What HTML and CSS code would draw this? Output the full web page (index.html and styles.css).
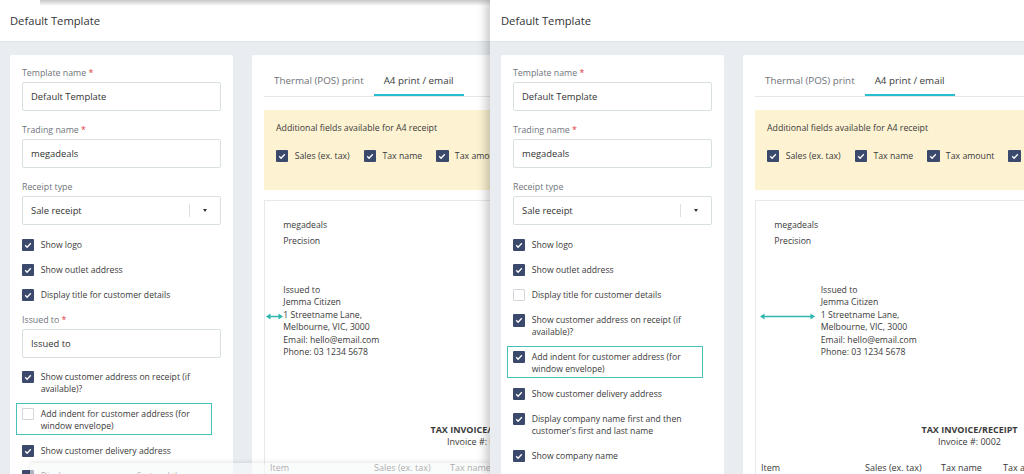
FILE: index.html
```html
<!DOCTYPE html>
<html>
<head>
<meta charset="utf-8">
<link rel="stylesheet" href="styles.css">
</head>
<body>
<div class="stage">
  <section class="shot shot-a">
    <header class="topbar">Default Template</header>
    <div class="main">
      <div class="card form-card">
        <div class="field">
          <div class="label">Template name <span class="req">*</span></div>
          <div class="input">Default Template</div>
        </div>
        <div class="field">
          <div class="label">Trading name <span class="req">*</span></div>
          <div class="input">megadeals</div>
        </div>
        <div class="field">
          <div class="label">Receipt type</div>
          <div class="input select">Sale receipt<span class="sep"></span><span class="caret-box"><span class="caret"></span></span></div>
        </div>
        <div class="check-row first"><span class="cb"><svg viewBox="0 0 12 12"><path d="M3.2 6.3l1.9 1.9 3.7-3.9"/></svg></span><span>Show logo</span></div>
        <div class="check-row"><span class="cb"><svg viewBox="0 0 12 12"><path d="M3.2 6.3l1.9 1.9 3.7-3.9"/></svg></span><span>Show outlet address</span></div>
        <div class="check-row"><span class="cb"><svg viewBox="0 0 12 12"><path d="M3.2 6.3l1.9 1.9 3.7-3.9"/></svg></span><span>Display title for customer details</span></div>
        <div class="field">
          <div class="label">Issued to <span class="req">*</span></div>
          <div class="input">Issued to</div>
        </div>
        <div class="check-row"><span class="cb"><svg viewBox="0 0 12 12"><path d="M3.2 6.3l1.9 1.9 3.7-3.9"/></svg></span><span>Show customer address on receipt (if<br>available)?</span></div>
        <div class="check-row hl"><span class="cb off"></span><span>Add indent for customer address (for<br>window envelope)</span></div>
        <div class="check-row"><span class="cb"><svg viewBox="0 0 12 12"><path d="M3.2 6.3l1.9 1.9 3.7-3.9"/></svg></span><span>Show customer delivery address</span></div>
        <div class="check-row"><span class="cb"><svg viewBox="0 0 12 12"><path d="M3.2 6.3l1.9 1.9 3.7-3.9"/></svg></span><span>Display company name first and then<br>customer's first and last name</span></div>
      </div>
      <div class="card preview-card">
        <div class="tabs">
          <div class="tab">Thermal (POS) print</div>
          <div class="tab active">A4 print / email</div>
        </div>
        <div class="extra">
          <div>Additional fields available for A4 receipt</div>
          <div class="extra-opts">
            <div class="opt"><span class="cb"><svg viewBox="0 0 12 12"><path d="M3.2 6.3l1.9 1.9 3.7-3.9"/></svg></span>Sales (ex. tax)</div>
            <div class="opt"><span class="cb"><svg viewBox="0 0 12 12"><path d="M3.2 6.3l1.9 1.9 3.7-3.9"/></svg></span>Tax name</div>
            <div class="opt"><span class="cb"><svg viewBox="0 0 12 12"><path d="M3.2 6.3l1.9 1.9 3.7-3.9"/></svg></span>Tax amount</div>
            <div class="opt"><span class="cb"><svg viewBox="0 0 12 12"><path d="M3.2 6.3l1.9 1.9 3.7-3.9"/></svg></span>Discount</div>
          </div>
        </div>
        <div class="sheet">
          <div class="biz">
            <div>megadeals</div>
            <div class="l2">Precision</div>
          </div>
          <div class="cust">
            <svg class="arrow arrow-a" width="17" height="7" viewBox="0 0 17 7"><path d="M3 3.5H14" stroke="#2fb7ae" stroke-width="1.5"/><path d="M0 3.5L4.5 0.6V6.4Z M17 3.5L12.5 0.6V6.4Z" fill="#2fb7ae"/></svg>
            <div>Issued to</div>
            <div>Jemma Citizen</div>
            <div>1 Streetname Lane,</div>
            <div>Melbourne, VIC, 3000</div>
            <div>Email: hello@email.com</div>
            <div>Phone: 03 1234 5678</div>
          </div>
          <div class="inv">
            <div class="inv-title">TAX INVOICE/RECEIPT</div>
            <div>Invoice #: 0002</div>
          </div>
          <div class="thead">
            <span class="c-item">Item</span><span class="c-sales">Sales (ex. tax)</span><span class="c-tname">Tax name</span><span>Tax amount</span>
          </div>
        </div>
      </div>
    </div>
    <div class="shade-top"></div>
    <div class="shade-bottom"></div>
  </section>

  <section class="shot shot-b">
    <header class="topbar">Default Template</header>
    <div class="main">
      <div class="card form-card">
        <div class="field">
          <div class="label">Template name <span class="req">*</span></div>
          <div class="input">Default Template</div>
        </div>
        <div class="field">
          <div class="label">Trading name <span class="req">*</span></div>
          <div class="input">megadeals</div>
        </div>
        <div class="field">
          <div class="label">Receipt type</div>
          <div class="input select">Sale receipt<span class="sep"></span><span class="caret-box"><span class="caret"></span></span></div>
        </div>
        <div class="check-row first"><span class="cb"><svg viewBox="0 0 12 12"><path d="M3.2 6.3l1.9 1.9 3.7-3.9"/></svg></span><span>Show logo</span></div>
        <div class="check-row"><span class="cb"><svg viewBox="0 0 12 12"><path d="M3.2 6.3l1.9 1.9 3.7-3.9"/></svg></span><span>Show outlet address</span></div>
        <div class="check-row"><span class="cb off"></span><span>Display title for customer details</span></div>
        <div class="check-row"><span class="cb"><svg viewBox="0 0 12 12"><path d="M3.2 6.3l1.9 1.9 3.7-3.9"/></svg></span><span>Show customer address on receipt (if<br>available)?</span></div>
        <div class="check-row hl"><span class="cb"><svg viewBox="0 0 12 12"><path d="M3.2 6.3l1.9 1.9 3.7-3.9"/></svg></span><span>Add indent for customer address (for<br>window envelope)</span></div>
        <div class="check-row"><span class="cb"><svg viewBox="0 0 12 12"><path d="M3.2 6.3l1.9 1.9 3.7-3.9"/></svg></span><span>Show customer delivery address</span></div>
        <div class="check-row"><span class="cb"><svg viewBox="0 0 12 12"><path d="M3.2 6.3l1.9 1.9 3.7-3.9"/></svg></span><span>Display company name first and then<br>customer's first and last name</span></div>
        <div class="check-row"><span class="cb"><svg viewBox="0 0 12 12"><path d="M3.2 6.3l1.9 1.9 3.7-3.9"/></svg></span><span>Show company name</span></div>
      </div>
      <div class="card preview-card">
        <div class="tabs">
          <div class="tab">Thermal (POS) print</div>
          <div class="tab active">A4 print / email</div>
        </div>
        <div class="extra">
          <div>Additional fields available for A4 receipt</div>
          <div class="extra-opts">
            <div class="opt"><span class="cb"><svg viewBox="0 0 12 12"><path d="M3.2 6.3l1.9 1.9 3.7-3.9"/></svg></span>Sales (ex. tax)</div>
            <div class="opt"><span class="cb"><svg viewBox="0 0 12 12"><path d="M3.2 6.3l1.9 1.9 3.7-3.9"/></svg></span>Tax name</div>
            <div class="opt"><span class="cb"><svg viewBox="0 0 12 12"><path d="M3.2 6.3l1.9 1.9 3.7-3.9"/></svg></span>Tax amount</div>
            <div class="opt"><span class="cb"><svg viewBox="0 0 12 12"><path d="M3.2 6.3l1.9 1.9 3.7-3.9"/></svg></span>Discount</div>
          </div>
        </div>
        <div class="sheet">
          <div class="biz">
            <div>megadeals</div>
            <div class="l2">Precision</div>
          </div>
          <div class="cust cust-indent">
            <svg class="arrow arrow-b" width="55" height="7" viewBox="0 0 55 7"><path d="M3 3.5H52" stroke="#2fb7ae" stroke-width="1.5"/><path d="M0 3.5L4.5 0.6V6.4Z M55 3.5L50.5 0.6V6.4Z" fill="#2fb7ae"/></svg>
            <div>Issued to</div>
            <div>Jemma Citizen</div>
            <div>1 Streetname Lane,</div>
            <div>Melbourne, VIC, 3000</div>
            <div>Email: hello@email.com</div>
            <div>Phone: 03 1234 5678</div>
          </div>
          <div class="inv">
            <div class="inv-title">TAX INVOICE/RECEIPT</div>
            <div>Invoice #: 0002</div>
          </div>
          <div class="thead">
            <span class="c-item">Item</span><span class="c-sales">Sales (ex. tax)</span><span class="c-tname">Tax name</span><span>Tax amount</span>
          </div>
        </div>
      </div>
    </div>
  </section>
</div>
</body>
</html>
```

FILE: styles.css
```css
* { box-sizing: border-box; margin: 0; padding: 0; }
html, body { width: 1024px; height: 474px; overflow: hidden; }
body { font-family: "Open Sans", "Noto Sans", sans-serif; color: #3a3a3a; background: #e9edf2; }

.stage { display: flex; height: 474px; }

.shot { position: relative; overflow: hidden; height: 474px; background: #e9edf2; display: flex; flex-direction: column; }
.shot-a { width: 490px; flex-shrink: 0; }
.shot-b { flex: 1; min-width: 0; z-index: 1; box-shadow: -4px 0 9px rgba(0, 0, 0, 0.22); }

.topbar { height: 42px; flex-shrink: 0; background: #fff; border-bottom: 1px solid #e0e4e9; display: flex; align-items: center; padding-left: 10px; font-size: 11.2px; color: #333; }
.shot-b .topbar { padding-left: 11px; }

.main { display: flex; gap: 19px; padding: 13px 10px 0; align-items: flex-start; }
.shot-b .main { padding-left: 11px; }

.card { background: #fff; border-radius: 2px; padding: 12px; flex-shrink: 0; min-height: 440px; }

.form-card { width: 223px; display: flex; flex-direction: column; gap: 12.8px; }
.field { display: flex; flex-direction: column; gap: 3px; }
.label { font-size: 8.8px; line-height: 12px; color: #6f757d; }
.req { color: #e2383f; }
.input { height: 29px; border: 1px solid #d8e0e2; border-radius: 2px; display: flex; align-items: center; padding-left: 8px; font-size: 9.4px; color: #333; }
.select .sep { margin-left: auto; width: 1px; height: 13px; background: #dcdfe3; }
.caret-box { width: 30px; display: flex; justify-content: center; }
.caret { width: 0; height: 0; border-left: 2.5px solid transparent; border-right: 2.5px solid transparent; border-top: 3px solid #333; }

.check-row { position: relative; display: flex; align-items: flex-start; gap: 6.3px; font-size: 8.65px; line-height: 12px; color: #3a3a3a; }
.check-row.first { margin-top: 1.2px; }
.cb { width: 12.4px; height: 12.4px; flex-shrink: 0; background: #3b4a6c; border-radius: 1px; display: flex; align-items: center; justify-content: center; }
.cb svg { width: 12px; height: 12px; }
.cb svg path { fill: none; stroke: #fff; stroke-width: 1.3; }
.cb.off { background: #fff; border: 1px solid #d3d7db; }
.hl::before { content: ""; position: absolute; top: -5px; bottom: -3px; left: -6px; right: 9.5px; border: 1.5px solid #45c1b9; }

.preview-card { width: 430px; }
.tabs { display: flex; border-bottom: 1px solid #e4e7eb; }
.tab { padding: 7px 10px 6.5px; font-size: 9.8px; line-height: 13px; color: #6d7278; border-bottom: 2px solid transparent; }
.tab.active { border-bottom-color: #27bfd0; color: #3a3a3a; }

.extra { margin-top: 13px; background: #fdf3d3; padding: 12px 12px 28px; font-size: 8.75px; line-height: 12px; color: #3a3a3a; }
.extra-opts { display: flex; gap: 14px; margin-top: 16px; }
.opt { display: flex; align-items: center; gap: 6.3px; white-space: nowrap; }

.sheet { margin-top: 10px; border: 1px solid #e6e8eb; padding-top: 18px; font-size: 8.7px; line-height: 12.5px; color: #3a3a3a; min-height: 300px; }
.biz { padding-left: 18.3px; }
.biz .l2 { margin-top: 3.2px; }
.cust { position: relative; margin-top: 36.5px; padding-left: 18.3px; }
.cust-indent { padding-left: 64.7px; }
.arrow { position: absolute; top: 29.5px; }
.arrow-a { left: 0.7px; }
.arrow-b { left: 4px; }
.inv { margin-top: 65px; margin-left: 147.5px; width: 132px; text-align: center; font-size: 9px; }
.inv-title { font-weight: 700; }
.thead { margin-top: 13.25px; padding-left: 5px; display: flex; font-size: 9px; white-space: nowrap; }
.thead span { flex-shrink: 0; }
.c-item { width: 104px; }
.c-sales { width: 76px; }
.c-tname { width: 62px; }

.shade-top { position: absolute; top: 0; left: 40px; right: 0; height: 6px; background: linear-gradient(rgba(0, 0, 0, 0.22), rgba(0, 0, 0, 0)); }
.shade-bottom { position: absolute; left: 30px; right: 0; bottom: 0; height: 11px; background: rgba(247, 248, 249, 0.6); box-shadow: 0 -1px 4px rgba(0, 0, 0, 0.1); }
```
